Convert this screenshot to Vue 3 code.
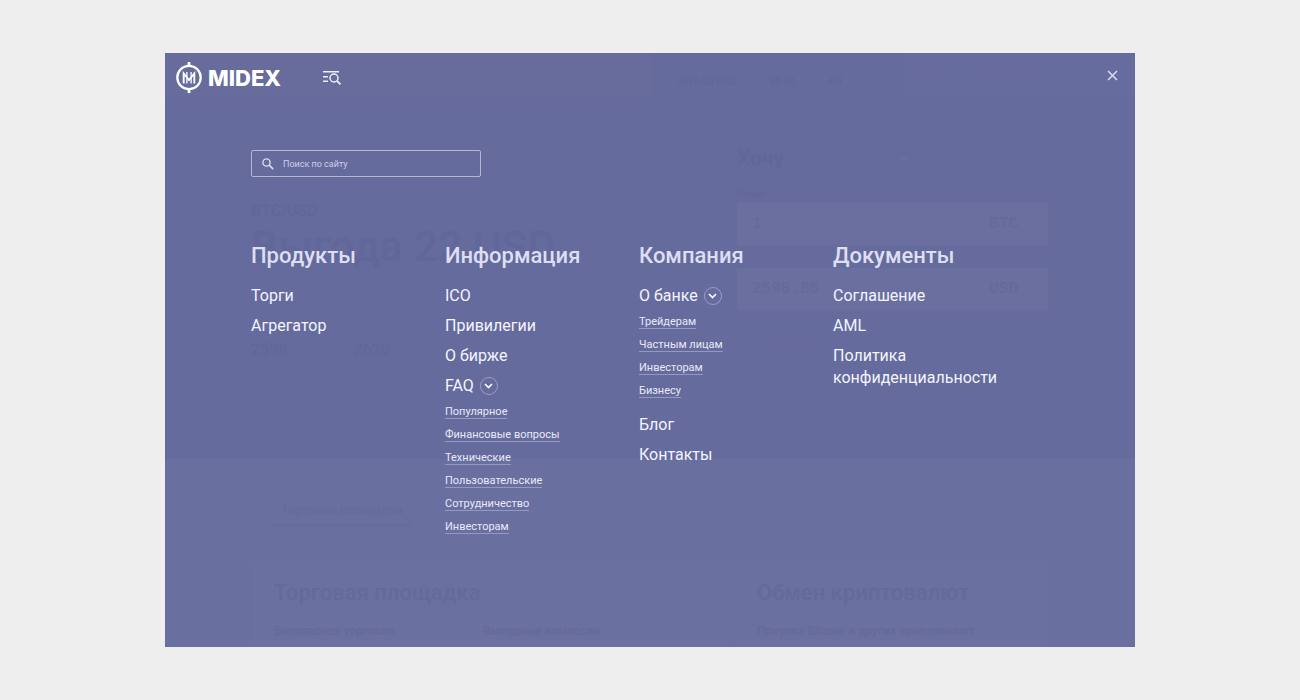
<script setup>
import { ref } from 'vue'

const query = ref('')

const columns = ref([
  {
    title: 'Продукты',
    items: [{ label: 'Торги' }, { label: 'Агрегатор' }],
  },
  {
    title: 'Информация',
    items: [
      { label: 'ICO' },
      { label: 'Привилегии' },
      { label: 'О бирже' },
      {
        label: 'FAQ',
        open: true,
        children: [
          'Популярное',
          'Финансовые вопросы',
          'Технические',
          'Пользовательские',
          'Сотрудничество',
          'Инвесторам',
        ],
      },
    ],
  },
  {
    title: 'Компания',
    items: [
      {
        label: 'О банке',
        open: true,
        children: ['Трейдерам', 'Частным лицам', 'Инвесторам', 'Бизнесу'],
      },
      { label: 'Блог' },
      { label: 'Контакты' },
    ],
  },
  {
    title: 'Документы',
    items: [
      { label: 'Соглашение' },
      { label: 'AML' },
      { label: 'Политика конфиденциальности' },
    ],
  },
])
</script>

<template>
  <div class="page">
    <div class="screen">
      <!-- Home page dimmed behind the menu -->
      <div class="backdrop" aria-hidden="true">
        <div class="hero">
          <div class="topbar">
            <div class="topnav">
              <span>Торги</span><span>Агрегатор</span><span>Привилегии</span><span>FAQ</span>
            </div>
            <div class="rates"><span>3076.00 USD</span><span>90.00</span><span>RU</span></div>
            <div class="account"><span>Войти</span><span>Регистрация</span></div>
          </div>
          <div class="hero-body">
            <div class="offer">
              <div class="pair">BTC/USD</div>
              <div class="profit">Выгода 22 USD</div>
              <div class="stats"><span>2598</span><span>2620</span></div>
            </div>
            <div class="exchange">
              <div class="want">
                <span>Хочу</span>
                <svg width="8" height="5" viewBox="0 0 8 5" fill="none" stroke="#6d72a3" stroke-width="1.500">
                  <path d="M1 1l3 3 3-3" />
                </svg>
              </div>
              <div class="field-label">Отдаю</div>
              <div class="field"><span>1</span><span>BTC</span></div>
              <div class="field"><span>2598.85</span><span>USD</span></div>
              <div class="swap">Обменять</div>
            </div>
          </div>
        </div>
        <div class="tabs"><span class="tab">Торговая площадка</span></div>
        <div class="cards">
          <div class="card">
            <div class="card-title">Торговая площадка</div>
            <div class="card-text"><span>Безопасная торговля</span><span>Выгодные комиссии</span></div>
          </div>
          <div class="card">
            <div class="card-title">Обмен криптовалют</div>
            <div class="card-text"><span>Покупка Bitcoin и других криптовалют</span></div>
          </div>
        </div>
      </div>

      <div class="menu">
        <header class="header">
          <a class="logo" href="#" aria-label="MIDEX">
            <svg width="28" height="32" viewBox="0 0 28 32" fill="none" stroke="#fff">
              <circle cx="14" cy="15.500" r="11.700" stroke-width="2.300" />
              <path d="M14 0v5M14 26v5" stroke-width="2.800" />
              <path d="M8.700 21.500V11.500l5.300 6.500 5.300-6.500v10" stroke-width="1.900" />
              <path d="M11.900 21.500V10M16.100 21.500V10" stroke-width="1.300" />
            </svg>
            <span class="wordmark">MIDEX</span>
          </a>
          <button class="icon-button toggle" type="button" aria-label="Меню и поиск">
            <svg width="20" height="16" viewBox="0 0 20 16" fill="none" stroke="#eeeef8" stroke-width="1.500">
              <path d="M1 1.700h16M1 6.700h5M1 11.200h5" />
              <circle cx="12" cy="8" r="4" />
              <path d="M14.900 10.900l3.600 3.400" stroke-width="1.800" />
            </svg>
          </button>
          <button class="icon-button close" type="button" aria-label="Закрыть">
            <svg width="11" height="11" viewBox="0 0 11 11" fill="none" stroke="#dcdcf0" stroke-width="1.500">
              <path d="M1 1l9 9M10 1l-9 9" />
            </svg>
          </button>
        </header>

        <div class="content">
          <form class="search" role="search" @submit.prevent>
            <svg width="12" height="12" viewBox="0 0 12 12" fill="none" stroke="#dcdcf0">
              <circle cx="4.500" cy="4.500" r="3.600" stroke-width="1.400" />
              <path d="M7 7l4.200 4.200" stroke-width="1.700" />
            </svg>
            <input v-model="query" type="text" placeholder="Поиск по сайту" aria-label="Поиск по сайту" />
          </form>

          <nav class="columns">
            <section v-for="column in columns" :key="column.title">
              <h2>{{ column.title }}</h2>
              <ul class="items">
                <li v-for="item in column.items" :key="item.label">
                  <div class="item">
                    <a href="#">{{ item.label }}</a>
                    <button
                      v-if="item.children"
                      class="expand"
                      type="button"
                      :aria-label="item.label"
                      :aria-expanded="item.open"
                      @click="item.open = !item.open"
                    >
                      <svg width="9" height="6" viewBox="0 0 9 6" fill="none" stroke="#fff" stroke-width="1.600">
                        <path d="M1 1l3.500 3.500L8 1" />
                      </svg>
                    </button>
                  </div>
                  <ul v-if="item.children && item.open" class="subitems">
                    <li v-for="child in item.children" :key="child">
                      <a href="#">{{ child }}</a>
                    </li>
                  </ul>
                </li>
              </ul>
            </section>
          </nav>
        </div>
      </div>
    </div>
  </div>
</template>

<style>
body {
  background: #eeeeee;
}
</style>

<style scoped>
.page {
  box-sizing: border-box;
  min-height: 100vh;
  padding: 53px 165px;
  display: flex;
  font-family: Roboto, "Noto Sans", sans-serif;
}
.screen {
  position: relative;
  flex: 1;
  overflow: hidden;
  background: #696f9f;
}
.menu {
  position: relative;
}

/* backdrop */
.backdrop {
  position: absolute;
  inset: 0;
  overflow: hidden;
  color: #5f6599;
  font-weight: 500;
}
.hero {
  height: 406px;
  background: #656b9c;
}
.topbar {
  display: flex;
  height: 46px;
  font-size: 10px;
  line-height: 48px;
  color: #6a6c9f;
}
.topnav {
  display: flex;
  flex: 1;
  gap: 26px;
  padding-left: 200px;
  background: #676c9d;
}
.rates {
  display: flex;
  gap: 34px;
  box-sizing: border-box;
  width: 254px;
  padding-left: 26px;
  line-height: 58px;
  color: #61679a;
}
.account {
  display: flex;
  gap: 36px;
  width: 230px;
  padding-left: 16px;
  background: #666c9d;
  box-sizing: border-box;
}
.hero-body {
  display: flex;
  justify-content: space-between;
  padding: 46px 87px 0 86px;
}
.offer {
  padding-top: 54px;
}
.pair {
  font-size: 16px;
  line-height: 24px;
  color: #61679a;
}
.profit {
  font-size: 43px;
  line-height: 46px;
  color: #61679a;
}
.stats {
  display: flex;
  gap: 66px;
  padding-top: 69px;
  font-size: 16px;
  line-height: 24px;
  color: #62679a;
}
.exchange {
  width: 311px;
}
.want {
  display: flex;
  align-items: center;
  gap: 116px;
  font-size: 21px;
  line-height: 26px;
  color: #61679a;
}
.field-label {
  padding: 16px 0 2px;
  font-size: 9px;
  line-height: 14px;
  color: #61679a;
}
.field {
  display: flex;
  justify-content: space-between;
  margin-bottom: 23px;
  padding: 0 30px 0 15px;
  background: #6a6fa0;
  font: bold 16px/42px "Liberation Mono", monospace;
  color: #646a9c;
}
.swap {
  width: 116px;
  font-size: 13px;
  line-height: 34px;
  text-align: center;
  color: #696c9e;
}
.tabs {
  padding: 40px 108px 0;
}
.tab {
  display: inline-block;
  border-bottom: 2px solid #656b9d;
  padding: 0 8px 4px;
  font-size: 13px;
  line-height: 20px;
  color: #656b9d;
}
.cards {
  display: grid;
  grid-template-columns: 475fr 314fr;
  gap: 8px;
  padding: 36px 87px 0 86px;
}
.card {
  height: 120px;
  padding: 17px 23px;
  background: #6a70a0;
}
.card-title {
  font-size: 22px;
  line-height: 28px;
  color: #636a9c;
}
.card-text {
  display: flex;
  gap: 88px;
  padding-top: 16px;
  font-size: 12px;
  line-height: 16px;
  white-space: nowrap;
  color: #656a9d;
}

/* menu */
.header {
  display: flex;
  align-items: center;
  height: 49px;
  padding: 0 16px 0 10px;
}
.logo {
  display: flex;
  align-items: center;
  gap: 5px;
  color: #ffffff;
  text-decoration: none;
}
.logo svg {
  display: block;
}
.wordmark {
  font: 800 22px/32px Inter, sans-serif;
}
.icon-button {
  display: flex;
  padding: 0;
  border: 0;
  background: none;
  cursor: pointer;
}
.toggle {
  margin-left: 41px;
}
.close {
  margin: 0 1px 4px auto;
}
.content {
  padding: 48px 108px 48px 86px;
}
.search {
  display: flex;
  align-items: center;
  gap: 9px;
  box-sizing: border-box;
  width: 230px;
  height: 27px;
  padding: 0 10px;
  border: 1px solid #b5b7d3;
  border-radius: 2px;
}
.search input {
  flex: 1;
  min-width: 0;
  padding: 0;
  border: 0;
  outline: 0;
  background: none;
  color: #ffffff;
  font: 9px/16px Roboto, sans-serif;
}
.search input::placeholder {
  color: #cfd0e5;
  opacity: 1;
}
.columns {
  display: grid;
  grid-template-columns: repeat(4, minmax(0, 1fr));
  margin-top: 65px;
}
h2 {
  margin: 0 0 15px;
  color: #dedef2;
  font-size: 22px;
  font-weight: 500;
  line-height: 28px;
}
ul {
  margin: 0;
  padding: 0;
  list-style: none;
}
.items {
  display: grid;
  gap: 8px;
}
.item {
  display: flex;
  align-items: center;
  gap: 6px;
  font-size: 16px;
  line-height: 22px;
}
.item a {
  color: #f4f4ff;
  text-decoration: none;
}
.expand {
  display: flex;
  align-items: center;
  justify-content: center;
  width: 18px;
  height: 18px;
  padding: 0;
  border: 1px solid #9a9dc4;
  border-radius: 50%;
  background: none;
  cursor: pointer;
}
.subitems {
  padding: 3px 0 4px;
}
.subitems li {
  display: flex;
  height: 23px;
  align-items: center;
}
.subitems a {
  border-bottom: 1px solid #9598bf;
  color: #e9e9f8;
  font-size: 11px;
  line-height: 13px;
  text-decoration: none;
}
</style>
